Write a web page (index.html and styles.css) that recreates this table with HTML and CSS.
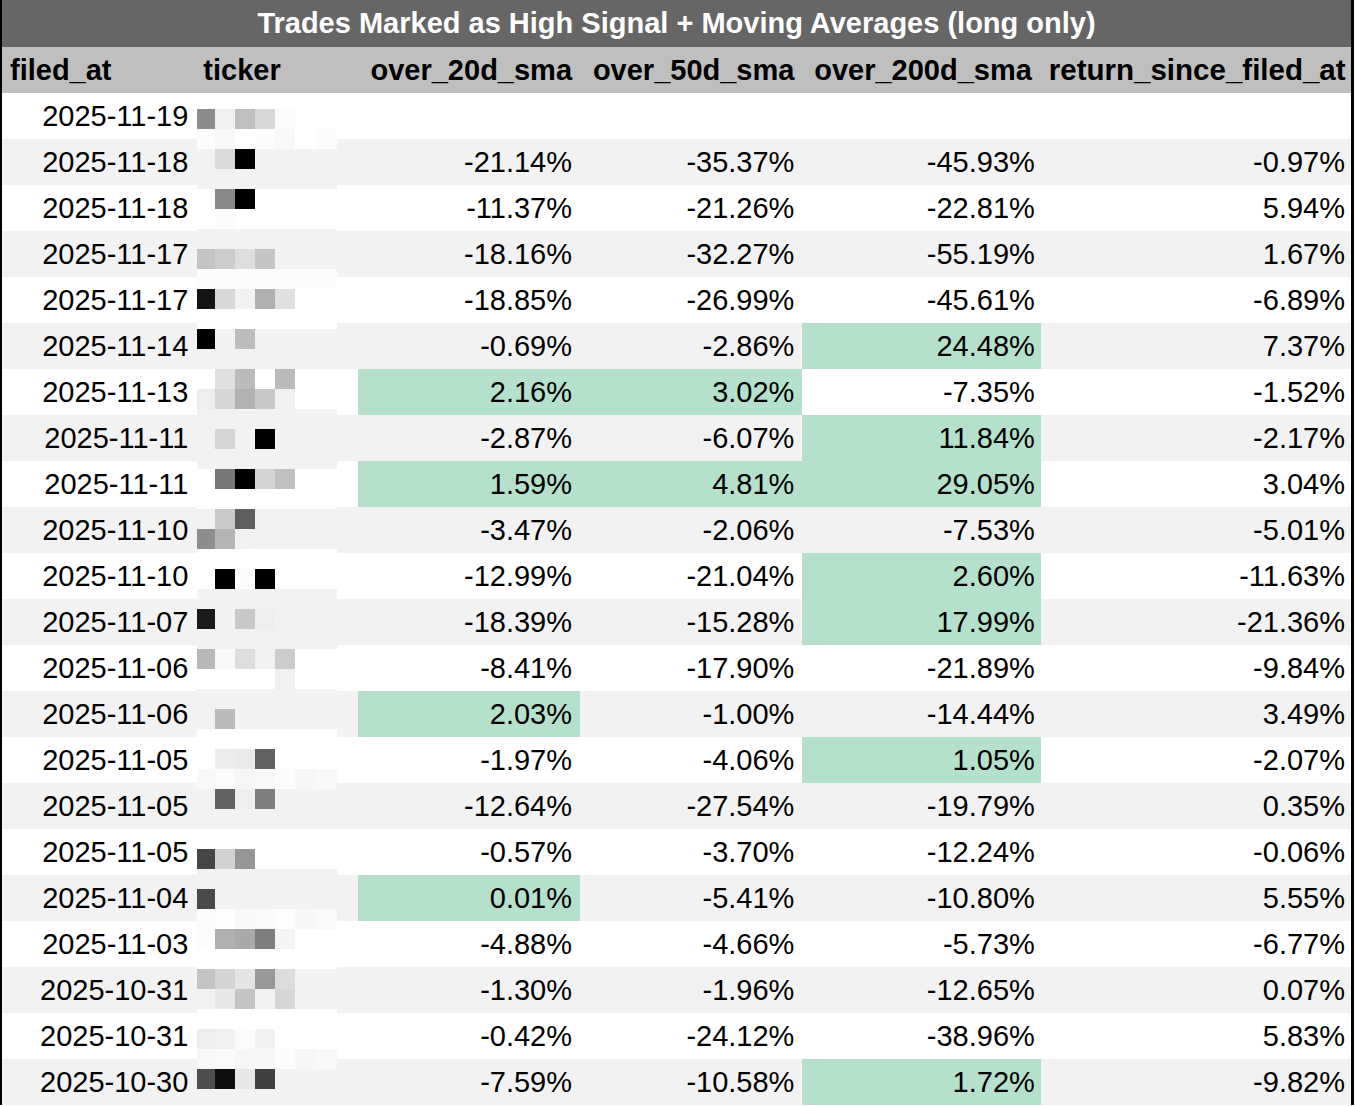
FILE: index.html
```html
<!DOCTYPE html>
<html>
<head>
<meta charset="utf-8">
<link rel="stylesheet" href="styles.css">
</head>
<body>
<div class="wrap">
<table class="trades">
<colgroup><col class="c-date"><col class="c-tick"><col class="c-20"><col class="c-50"><col class="c-200"><col class="c-ret"></colgroup>
<thead>
<tr class="title"><th colspan="6">Trades Marked as High Signal + Moving Averages (long only)</th></tr>
<tr class="head"><th class="l">filed_at</th><th class="l">ticker</th><th>over_20d_sma</th><th>over_50d_sma</th><th class="n200">over_200d_sma</th><th class="nret">return_since_filed_at</th></tr>
</thead>
<tbody>
<tr><td class="d">2025-11-19</td><td></td><td></td><td></td><td></td><td></td></tr>
<tr><td class="d">2025-11-18</td><td></td><td>-21.14%</td><td>-35.37%</td><td>-45.93%</td><td>-0.97%</td></tr>
<tr><td class="d">2025-11-18</td><td></td><td>-11.37%</td><td>-21.26%</td><td>-22.81%</td><td>5.94%</td></tr>
<tr><td class="d">2025-11-17</td><td></td><td>-18.16%</td><td>-32.27%</td><td>-55.19%</td><td>1.67%</td></tr>
<tr><td class="d">2025-11-17</td><td></td><td>-18.85%</td><td>-26.99%</td><td>-45.61%</td><td>-6.89%</td></tr>
<tr><td class="d">2025-11-14</td><td></td><td>-0.69%</td><td>-2.86%</td><td class="hi">24.48%</td><td>7.37%</td></tr>
<tr><td class="d">2025-11-13</td><td></td><td class="hi">2.16%</td><td class="hi">3.02%</td><td>-7.35%</td><td>-1.52%</td></tr>
<tr><td class="d">2025-11-11</td><td></td><td>-2.87%</td><td>-6.07%</td><td class="hi">11.84%</td><td>-2.17%</td></tr>
<tr><td class="d">2025-11-11</td><td></td><td class="hi">1.59%</td><td class="hi">4.81%</td><td class="hi">29.05%</td><td>3.04%</td></tr>
<tr><td class="d">2025-11-10</td><td></td><td>-3.47%</td><td>-2.06%</td><td>-7.53%</td><td>-5.01%</td></tr>
<tr><td class="d">2025-11-10</td><td></td><td>-12.99%</td><td>-21.04%</td><td class="hi">2.60%</td><td>-11.63%</td></tr>
<tr><td class="d">2025-11-07</td><td></td><td>-18.39%</td><td>-15.28%</td><td class="hi">17.99%</td><td>-21.36%</td></tr>
<tr><td class="d">2025-11-06</td><td></td><td>-8.41%</td><td>-17.90%</td><td>-21.89%</td><td>-9.84%</td></tr>
<tr><td class="d">2025-11-06</td><td></td><td class="hi">2.03%</td><td>-1.00%</td><td>-14.44%</td><td>3.49%</td></tr>
<tr><td class="d">2025-11-05</td><td></td><td>-1.97%</td><td>-4.06%</td><td class="hi">1.05%</td><td>-2.07%</td></tr>
<tr><td class="d">2025-11-05</td><td></td><td>-12.64%</td><td>-27.54%</td><td>-19.79%</td><td>0.35%</td></tr>
<tr><td class="d">2025-11-05</td><td></td><td>-0.57%</td><td>-3.70%</td><td>-12.24%</td><td>-0.06%</td></tr>
<tr><td class="d">2025-11-04</td><td></td><td class="hi">0.01%</td><td>-5.41%</td><td>-10.80%</td><td>5.55%</td></tr>
<tr><td class="d">2025-11-03</td><td></td><td>-4.88%</td><td>-4.66%</td><td>-5.73%</td><td>-6.77%</td></tr>
<tr><td class="d">2025-10-31</td><td></td><td>-1.30%</td><td>-1.96%</td><td>-12.65%</td><td>0.07%</td></tr>
<tr><td class="d">2025-10-31</td><td></td><td>-0.42%</td><td>-24.12%</td><td>-38.96%</td><td>5.83%</td></tr>
<tr><td class="d">2025-10-30</td><td></td><td>-7.59%</td><td>-10.58%</td><td class="hi">1.72%</td><td>-9.82%</td></tr>
</tbody>
</table>
<div class="mosaic" aria-hidden="true">
<div class="mr"><i class="g8c"></i><i class="gf0"></i><i class="gbf"></i><i class="gd8"></i><i class="gfc"></i><i class="gff"></i><i class="gff"></i></div>
<div class="mr"><i class="gfc"></i><i class="gf8"></i><i class="gff"></i><i class="gfc"></i><i class="gf8"></i><i class="gff"></i><i class="gfc"></i></div>
<div class="mr"><i class="gf2"></i><i class="gda"></i><i class="g00"></i><i class="gf2"></i><i class="gf2"></i><i class="gf2"></i><i class="gf2"></i></div>
<div class="mr gf2"></div>
<div class="mr"><i class="gff"></i><i class="g88"></i><i class="g00"></i><i class="gff"></i><i class="gff"></i><i class="gff"></i><i class="gff"></i></div>
<div class="mr"><i class="gff"></i><i class="gfc"></i><i class="gff"></i><i class="gff"></i><i class="gff"></i><i class="gff"></i><i class="gff"></i></div>
<div class="mr gf2"></div>
<div class="mr"><i class="gc4"></i><i class="gcc"></i><i class="gdd"></i><i class="gc6"></i><i class="gf2"></i><i class="gf2"></i><i class="gf2"></i></div>
<div class="mr gfc"></div>
<div class="mr"><i class="g14"></i><i class="gd8"></i><i class="gf2"></i><i class="gb0"></i><i class="ge0"></i><i class="gff"></i><i class="gff"></i></div>
<div class="mr gff"></div>
<div class="mr"><i class="g00"></i><i class="gf2"></i><i class="gbc"></i><i class="gf2"></i><i class="gf2"></i><i class="gf2"></i><i class="gf2"></i></div>
<div class="mr gf2"></div>
<div class="mr"><i class="gff"></i><i class="ge0"></i><i class="gbb"></i><i class="gff"></i><i class="gbb"></i><i class="gff"></i><i class="gff"></i></div>
<div class="mr"><i class="gee"></i><i class="gd6"></i><i class="gb2"></i><i class="gc8"></i><i class="gf0"></i><i class="gff"></i><i class="gff"></i></div>
<div class="mr gf2"></div>
<div class="mr"><i class="gf2"></i><i class="gd6"></i><i class="gf2"></i><i class="g00"></i><i class="gf2"></i><i class="gf2"></i><i class="gf2"></i></div>
<div class="mr gf2"></div>
<div class="mr"><i class="gff"></i><i class="g77"></i><i class="g00"></i><i class="gd4"></i><i class="gc0"></i><i class="gff"></i><i class="gff"></i></div>
<div class="mr gff"></div>
<div class="mr"><i class="gf2"></i><i class="gca"></i><i class="g5e"></i><i class="gf2"></i><i class="gf2"></i><i class="gf2"></i><i class="gf2"></i></div>
<div class="mr"><i class="g8e"></i><i class="gb4"></i><i class="gf0"></i><i class="gf2"></i><i class="gf2"></i><i class="gf2"></i><i class="gf2"></i></div>
<div class="mr gff"></div>
<div class="mr"><i class="gff"></i><i class="g00"></i><i class="gfc"></i><i class="g00"></i><i class="gff"></i><i class="gff"></i><i class="gff"></i></div>
<div class="mr gf2"></div>
<div class="mr"><i class="g1a"></i><i class="gf2"></i><i class="gc8"></i><i class="gee"></i><i class="gf2"></i><i class="gf2"></i><i class="gf2"></i></div>
<div class="mr gf2"></div>
<div class="mr"><i class="gb8"></i><i class="gf8"></i><i class="gdd"></i><i class="gf0"></i><i class="gcc"></i><i class="gff"></i><i class="gff"></i></div>
<div class="mr"><i class="gff"></i><i class="gff"></i><i class="gff"></i><i class="gff"></i><i class="gf0"></i><i class="gff"></i><i class="gff"></i></div>
<div class="mr gf2"></div>
<div class="mr"><i class="gf2"></i><i class="gbb"></i><i class="gf2"></i><i class="gf2"></i><i class="gf2"></i><i class="gf2"></i><i class="gf2"></i></div>
<div class="mr gff"></div>
<div class="mr"><i class="gff"></i><i class="ged"></i><i class="gea"></i><i class="g62"></i><i class="gff"></i><i class="gff"></i><i class="gff"></i></div>
<div class="mr"><i class="gf8"></i><i class="gfb"></i><i class="gf6"></i><i class="gf8"></i><i class="gfc"></i><i class="gf6"></i><i class="gf8"></i></div>
<div class="mr"><i class="gf2"></i><i class="g62"></i><i class="gee"></i><i class="g7e"></i><i class="gf2"></i><i class="gf2"></i><i class="gf2"></i></div>
<div class="mr gf2"></div>
<div class="mr gff"></div>
<div class="mr"><i class="g46"></i><i class="gd2"></i><i class="g96"></i><i class="gff"></i><i class="gff"></i><i class="gff"></i><i class="gff"></i></div>
<div class="mr gf2"></div>
<div class="mr"><i class="g4a"></i><i class="gf2"></i><i class="gf2"></i><i class="gf2"></i><i class="gf2"></i><i class="gf2"></i><i class="gf2"></i></div>
<div class="mr"><i class="gfb"></i><i class="gfd"></i><i class="gf8"></i><i class="gfa"></i><i class="gfd"></i><i class="gf7"></i><i class="gfa"></i></div>
<div class="mr"><i class="gfc"></i><i class="gb0"></i><i class="gaa"></i><i class="g7e"></i><i class="gf4"></i><i class="gff"></i><i class="gff"></i></div>
<div class="mr gff"></div>
<div class="mr"><i class="gc4"></i><i class="gd4"></i><i class="ge4"></i><i class="g98"></i><i class="gdc"></i><i class="gf2"></i><i class="gf2"></i></div>
<div class="mr"><i class="gf2"></i><i class="ge8"></i><i class="gc4"></i><i class="gf2"></i><i class="gd6"></i><i class="gf2"></i><i class="gf2"></i></div>
<div class="mr gff"></div>
<div class="mr"><i class="gee"></i><i class="gf0"></i><i class="gfb"></i><i class="gf2"></i><i class="gff"></i><i class="gff"></i><i class="gff"></i></div>
<div class="mr"><i class="gf8"></i><i class="gfa"></i><i class="gf6"></i><i class="gf6"></i><i class="gfc"></i><i class="gf6"></i><i class="gf8"></i></div>
<div class="mr"><i class="g4e"></i><i class="g0e"></i><i class="ge8"></i><i class="g40"></i><i class="gf2"></i><i class="gf2"></i><i class="gf2"></i></div>
</div>
</div>
</body>
</html>
```
FILE: styles.css
```css
html, body {
  margin: 0;
  padding: 0;
  background: #ffffff;
}

.wrap {
  position: relative;
  width: 1356px;
}

.trades {
  border-collapse: collapse;
  table-layout: fixed;
  width: 1354px;
  border-left: 2px solid #000;
  border-right: 3px solid #000;
  font-family: "Liberation Sans", Arial, Helvetica, sans-serif;
  font-size: 29px;
  color: #000;
}

.c-date { width: 194px; }
.c-tick { width: 162px; }
.c-20 { width: 222px; }
.c-50 { width: 222px; }
.c-200 { width: 238px; }
.c-ret { width: 311px; }

.trades th,
.trades td {
  padding: 0 8px;
  height: 46px;
  white-space: nowrap;
  overflow: hidden;
  box-sizing: border-box;
}

.title th {
  background: #666666;
  color: #ffffff;
  font-size: 29px;
  font-weight: bold;
  text-align: center;
  height: 47px;
}

.head th {
  background: #bfbfbf;
  font-weight: bold;
  text-align: right;
}

.head th.l {
  text-align: left;
}

.head th.n200 {
  padding-right: 9px;
}

.head th.nret {
  padding-right: 6px;
  font-size: 29.5px;
}

.trades td {
  text-align: right;
}

.trades td.d {
  padding-right: 7px;
}

.trades td:nth-child(5),
.trades td:nth-child(6) {
  padding-right: 6px;
}

.trades tbody tr:nth-child(even) td {
  background: #f2f2f2;
}

.trades tbody tr td.hi {
  background: #b5e0cc;
}

.mosaic {
  position: absolute;
  left: 197px;
  top: 109px;
  width: 140px;
}

.mr {
  display: flex;
  height: 20px;
}

.mr i {
  display: block;
  width: 20px;
  height: 20px;
}

.mr i:first-child { width: 18px; }
.mr i:last-child { width: 22px; }

.g00 { background: #000000; }
.g0e { background: #0e0e0e; }
.g14 { background: #141414; }
.g1a { background: #1a1a1a; }
.g40 { background: #404040; }
.g46 { background: #464646; }
.g4a { background: #4a4a4a; }
.g4e { background: #4e4e4e; }
.g5e { background: #5e5e5e; }
.g62 { background: #626262; }
.g77 { background: #777777; }
.g7e { background: #7e7e7e; }
.g88 { background: #888888; }
.g8c { background: #8c8c8c; }
.g8e { background: #8e8e8e; }
.g96 { background: #969696; }
.g98 { background: #989898; }
.gaa { background: #aaaaaa; }
.gb0 { background: #b0b0b0; }
.gb2 { background: #b2b2b2; }
.gb4 { background: #b4b4b4; }
.gb8 { background: #b8b8b8; }
.gbb { background: #bbbbbb; }
.gbc { background: #bcbcbc; }
.gbf { background: #bfbfbf; }
.gc0 { background: #c0c0c0; }
.gc4 { background: #c4c4c4; }
.gc6 { background: #c6c6c6; }
.gc8 { background: #c8c8c8; }
.gca { background: #cacaca; }
.gcc { background: #cccccc; }
.gd2 { background: #d2d2d2; }
.gd4 { background: #d4d4d4; }
.gd6 { background: #d6d6d6; }
.gd8 { background: #d8d8d8; }
.gda { background: #dadada; }
.gdc { background: #dcdcdc; }
.gdd { background: #dddddd; }
.ge0 { background: #e0e0e0; }
.ge4 { background: #e4e4e4; }
.ge8 { background: #e8e8e8; }
.gea { background: #eaeaea; }
.ged { background: #ededed; }
.gee { background: #eeeeee; }
.gf0 { background: #f0f0f0; }
.gf2 { background: #f2f2f2; }
.gf4 { background: #f4f4f4; }
.gf6 { background: #f6f6f6; }
.gf7 { background: #f7f7f7; }
.gf8 { background: #f8f8f8; }
.gfa { background: #fafafa; }
.gfb { background: #fbfbfb; }
.gfc { background: #fcfcfc; }
.gfd { background: #fdfdfd; }
.gff { background: #ffffff; }
```
